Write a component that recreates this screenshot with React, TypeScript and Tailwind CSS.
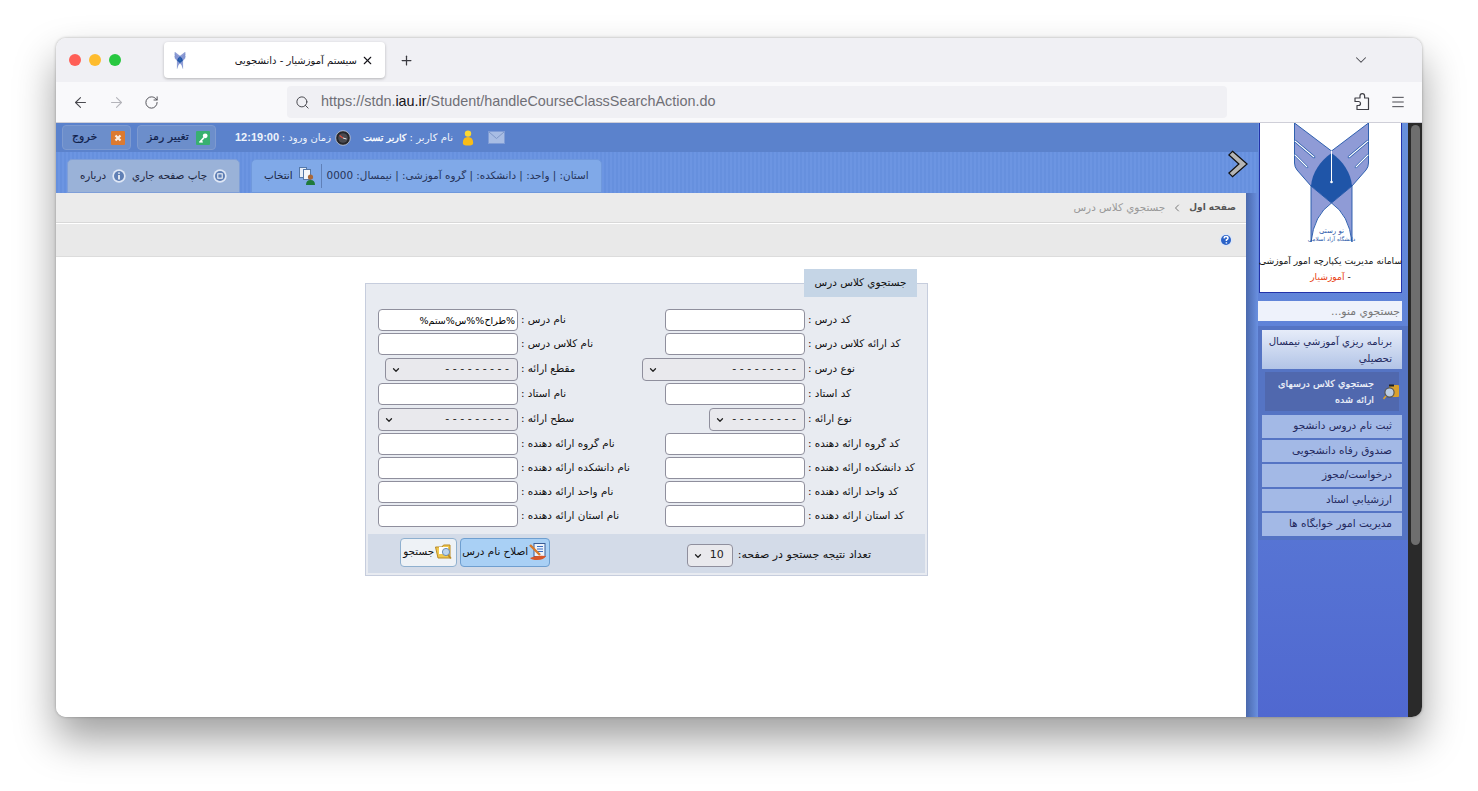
import React from "react";
import { ChevronDown, ChevronLeft, Menu, Plus, RotateCw, Search, X, ArrowLeft, ArrowRight } from "lucide-react";

const FONT = 'font-["DejaVu_Sans","Noto_Sans",sans-serif]';
const DASHES = "- - - - - - - - -";

const Logo: React.FC<{ className?: string; small?: boolean }> = ({ className, small }) => (
  <svg viewBox="0 0 75 121" className={className}>
    <g stroke="#1f55a8" strokeWidth="0.9" fill="#8f9bd6">
      <path d="M0.5 0 L37.5 28 L37.5 60 L17 63 L3 47 Q0.5 44 0.5 40 Z" />
      <path d="M74.5 0 L37.5 28 L37.5 60 L58 63 L72 47 Q74.5 44 74.5 40 Z" />
      <path d="M17 63 L37.5 80 Q20 92 17 119 Z" />
      <path d="M58 63 L37.5 80 Q55 92 58 119 Z" />
    </g>
    <path d="M17 63 C18 50 26 38 37.5 30 C49 38 57 50 58 63 L37.5 80 Z" fill="#1f55a8" />
    <g strokeLinecap="round">
      <path d="M1 18 L20 34 M1 32 L13 44 M74 18 L55 34 M74 32 L62 44" stroke="#1f55a8" strokeWidth="2.4" />
      <path d="M1 18 L20 34 M1 32 L13 44 M74 18 L55 34 M74 32 L62 44" stroke="#ffffff" strokeWidth="1.1" />
    </g>
    <path d="M37.5 28 L37.5 59" stroke="#ffffff" strokeWidth="1" />
    <circle cx="37.5" cy="59" r="1.3" fill="#ffffff" />
    {!small && (
      <>
        <text x="37.5" y="110" textAnchor="middle" fontSize="7" fill="#1f55a8" fontFamily="DejaVu Sans">نو رستی</text>
        <text x="37.5" y="118" textAnchor="middle" fontSize="5.6" fill="#1f55a8" fontFamily="DejaVu Sans">دانشگاه آزاد اسلامی</text>
      </>
    )}
  </svg>
);

const ExitIcon = () => (
  <svg viewBox="0 0 14 14" className="h-[14px] w-[14px]">
    <rect width="14" height="14" rx="1" fill="#dc7a30" />
    <path d="M4.5 4.5 L9.5 9.5 M9.5 4.5 L4.5 9.5" stroke="#fbeee2" strokeWidth="2.2" />
  </svg>
);

const KeyIcon = () => (
  <svg viewBox="0 0 14 14" className="h-[14px] w-[14px]">
    <rect width="14" height="14" rx="1" fill="#38b070" />
    <circle cx="9.2" cy="4.8" r="2.4" fill="#fff" />
    <path d="M8 6.5 L3.5 11.5 M5 10 L6.5 11.5" stroke="#fff" strokeWidth="1.7" />
  </svg>
);

const UserIcon = () => (
  <svg viewBox="0 0 12 16" className="h-[16px] w-[12px]">
    <circle cx="6" cy="3.6" r="3.2" fill="#fcd830" />
    <path d="M0.8 13 Q0.8 7 6 7 Q11.2 7 11.2 13 Q11.2 15.6 6 15.6 Q0.8 15.6 0.8 13 Z" fill="#f8bc18" />
  </svg>
);

const MailIcon = () => (
  <svg viewBox="0 0 17 13" className="h-[13px] w-[17px]">
    <rect x="0.5" y="0.5" width="16" height="12" fill="#a8bde4" stroke="#7f9cd6" />
    <path d="M1 1 L8.5 7.5 L16 1" fill="none" stroke="#7f98c8" />
  </svg>
);

const ClockIcon = () => (
  <svg viewBox="0 0 16 16" className="h-[16px] w-[16px]">
    <circle cx="8" cy="8" r="7.3" fill="#26262a" stroke="#c8cede" strokeWidth="0.8" />
    <circle cx="8" cy="8" r="4.8" fill="#4a4a50" />
    <path d="M8 8 L4.5 5.5" stroke="#e05040" strokeWidth="1.2" />
    <path d="M8 8 L11.5 9" stroke="#e8e8e8" strokeWidth="1" />
  </svg>
);

const RoundIcon: React.FC<{ glyph: "print" | "info" | "help" }> = ({ glyph }) => (
  <svg viewBox="0 0 14 14" className="h-[14px] w-[14px]">
    <circle cx="7" cy="7" r="6.7" fill="#dfe7f5" />
    <circle cx="7" cy="7" r="5" fill={glyph === "help" ? "#2a62c8" : "#5f7fb5"} />
    {glyph === "print" && <rect x="4.8" y="4.8" width="4.4" height="4.4" fill="none" stroke="#fff" strokeWidth="1" />}
    {glyph === "info" && <path d="M7 3.5 V4.8 M7 6 V10.5" stroke="#fff" strokeWidth="1.6" />}
    {glyph === "help" && (
      <path d="M5 5.4 Q5.2 3.6 7 3.6 Q9 3.6 9 5.2 Q9 6.2 7.4 7 V8 M7.4 9.2 V10.6" fill="none" stroke="#fff" strokeWidth="1.5" />
    )}
  </svg>
);

const SelectIcon = () => (
  <svg viewBox="0 0 16 18" className="h-[18px] w-[16px]">
    <rect x="0.5" y="0.5" width="7" height="10" fill="#e8eef8" stroke="#5578a8" />
    <rect x="4.5" y="2.5" width="7" height="10" fill="#f4f6fb" stroke="#5578a8" />
    <circle cx="11.5" cy="10" r="2.6" fill="#a8683a" />
    <path d="M7 18 Q7 13 11.5 13 Q16 13 16 18 Z" fill="#1f7a3a" />
  </svg>
);

const SearchMenuIcon = () => (
  <svg viewBox="0 0 16 16" className="h-[16px] w-[16px] shrink-0">
    <rect x="6" y="1" width="10" height="12" rx="1" fill="#d9a02c" />
    <rect x="6" y="0.5" width="5" height="2" fill="#222" />
    <circle cx="6.5" cy="8.5" r="4.6" fill="#b9cbe3" stroke="#555" strokeWidth="1.2" />
    <path d="M3 12 L0.5 15" stroke="#d9a02c" strokeWidth="1.6" />
  </svg>
);

const SpellIcon = () => (
  <svg viewBox="0 0 18 18" className="h-[18px] w-[18px]">
    <rect x="5" y="0.5" width="11" height="13" fill="#eef3fb" stroke="#3a5c96" />
    <path d="M8 3.5 H14 M8 6 H14 M8 8.5 H14" stroke="#3a6cc0" strokeWidth="1.1" />
    <path d="M1 2 L11 12" stroke="#d8792a" strokeWidth="2.4" />
    <path d="M1 15 Q7 12 17 13 Q15 17 8 17 Q3 17 1 15 Z" fill="#d8562a" />
  </svg>
);

const FolderIcon = () => (
  <svg viewBox="0 0 18 16" className="h-[16px] w-[18px]">
    <path d="M0.5 3 H7 L8.5 1 H15 V14 H3 Z" fill="#f0c84e" stroke="#b98a24" />
    <rect x="4" y="3" width="9" height="7" fill="#fff" />
    <circle cx="11" cy="8" r="3.6" fill="#bcd5ee" stroke="#6d8eb5" />
    <path d="M13 11 L16 14.5" stroke="#b98a24" strokeWidth="1.6" />
  </svg>
);

const PuzzleIcon = () => (
  <svg viewBox="0 0 18 18" className="h-[18px] w-[18px]" fill="none" stroke="#3f3f46" strokeWidth="1.2" strokeLinejoin="round">
    <path d="M7 5 V3 a2.3 2.3 0 0 1 4.6 0 V5 H15.5 V16.5 H4 V12.5 H5.5 a2 2 0 0 0 0 -4 H2 V5 Z" />
  </svg>
);

const HeaderButton: React.FC<{ label: string; width: string; icon: React.ReactNode }> = ({ label, width, icon }) => (
  <button className={`flex h-[25px] items-center justify-between rounded-[4px] border border-[#7d9ad0] bg-[#6c8ecb] pr-[5px] pl-[9px] text-[11px] whitespace-nowrap text-[#10204a] [-webkit-text-stroke:0.2px] ${width}`}>
    <span>{label}</span>
    {icon}
  </button>
);

const Field: React.FC<{ value?: string }> = ({ value }) => (
  <input
    dir="rtl"
    defaultValue={value}
    className="h-[22px] w-[140px] rounded-[4px] border border-[#8f8f9d] bg-white px-[2px] text-[9.5px] text-black outline-none"
  />
);

const Choice: React.FC<{ width: string; value?: string }> = ({ width, value }) => (
  <div className={`relative h-[23px] ${width}`}>
    <select
      dir="rtl"
      className="block h-full w-full appearance-none rounded-[4px] border border-[#8f8f9d] bg-[#e9e9ed] pr-[8px] text-[11px] text-[#222] outline-none"
    >
      <option>{value ?? DASHES}</option>
    </select>
    <ChevronDown className="pointer-events-none absolute top-[7px] left-[6px] h-[10px] w-[10px] text-[#222]" strokeWidth={3} />
  </div>
);

const Label: React.FC<{ children: React.ReactNode }> = ({ children }) => (
  <label className="w-full pl-[3px] text-left text-[10.4px] whitespace-nowrap text-[#111]">{children}</label>
);

const rows: { h: string; right: [string, React.ReactNode]; left: [string, React.ReactNode] }[] = [
  { h: "h-[24px]", right: ["کد درس :", <Field />], left: ["نام درس :", <Field value="%طراح%%س%ستم%" />] },
  { h: "h-[24px]", right: ["کد ارائه کلاس درس :", <Field />], left: ["نام کلاس درس :", <Field />] },
  { h: "h-[26px]", right: ["نوع درس :", <Choice width="w-[163px]" />], left: ["مقطع ارائه :", <Choice width="w-[133px]" />] },
  { h: "h-[24px]", right: ["کد استاد :", <Field />], left: ["نام استاد :", <Field />] },
  { h: "h-[26px]", right: ["نوع ارائه :", <Choice width="w-[96px]" />], left: ["سطح ارائه :", <Choice width="w-[140px]" />] },
  { h: "h-[24px]", right: ["کد گروه ارائه دهنده :", <Field />], left: ["نام گروه ارائه دهنده :", <Field />] },
  { h: "h-[24px]", right: ["کد دانشکده ارائه دهنده :", <Field />], left: ["نام دانشکده ارائه دهنده :", <Field />] },
  { h: "h-[24px]", right: ["کد واحد ارائه دهنده :", <Field />], left: ["نام واحد ارائه دهنده :", <Field />] },
  { h: "h-[24px]", right: ["کد استان ارائه دهنده :", <Field />], left: ["نام استان ارائه دهنده :", <Field />] },
];

const menuItems = ["ثبت نام دروس دانشجو", "صندوق رفاه دانشجویی", "درخواست/مجوز", "ارزشيابي استاد", "مديريت امور خوابگاه ها"];

const stripes = "bg-[repeating-linear-gradient(90deg,#6690de_0px,#6690de_2px,#6c95e2_2px,#6c95e2_4px)]";

const BrowserChrome = () => (
  <>
    <div className="flex h-[44px] items-center bg-[#f0f0f4] pl-[13px]">
      <div className="flex gap-[8px]">
        <span className="h-[12px] w-[12px] rounded-full bg-[#ff5f57]" />
        <span className="h-[12px] w-[12px] rounded-full bg-[#febc2e]" />
        <span className="h-[12px] w-[12px] rounded-full bg-[#28c840]" />
      </div>
      <div className="ml-[43px] flex h-[36px] w-[221px] items-center rounded-[4px] bg-white pr-[11px] pl-[9px] shadow-[0_1px_3px_rgba(0,0,0,0.25)]">
        <Logo small className="h-[17px] w-[14px]" />
        <span dir="rtl" className={`ml-auto text-[10px] text-[#15141a] ${FONT}`}>سیستم آموزشیار - دانشجویی</span>
        <X className="ml-[4px] h-[13px] w-[13px] text-[#15141a]" />
      </div>
      <Plus className="ml-[14px] h-[15px] w-[15px] text-[#3a3a40]" />
      <ChevronDown className="mr-[52px] ml-auto h-[18px] w-[18px] text-[#4a4a50]" strokeWidth={1.4} />
    </div>
    <div className="flex h-[41px] items-center border-b border-[#cfcfd8] bg-[#f9f9fb] pl-[16px]">
      <ArrowLeft className="h-[17px] w-[17px] text-[#4a4a50]" strokeWidth={1.5} />
      <ArrowRight className="ml-[19px] h-[17px] w-[17px] text-[#b4b4ba]" strokeWidth={1.5} />
      <RotateCw className="ml-[19px] h-[15px] w-[15px] text-[#4a4a50]" strokeWidth={1.5} />
      <div className="ml-[128px] flex h-[32px] w-[940px] items-center rounded-[4px] bg-[#f0f0f4] pl-[8px]">
        <Search className="h-[15px] w-[15px] text-[#4a4a50]" strokeWidth={1.6} />
        <span className='ml-[11px] font-["Liberation_Sans",sans-serif] text-[14.4px] text-[#6f6f76]'>
          https://stdn.<span className="text-[#15141a]">iau.ir</span>/Student/handleCourseClassSearchAction.do
        </span>
      </div>
      <span className="ml-[126px]"><PuzzleIcon /></span>
      <Menu className="ml-[19px] h-[16px] w-[16px] text-[#4a4a50]" strokeWidth={1.5} />
    </div>
  </>
);

const PageHeader = () => (
  <div className={`h-[70px] ${stripes}`}>
    <div className="flex h-[29px] items-center bg-[#5b82cc] pl-[6px] text-[#eef3fb]">
      <HeaderButton label="خروج" width="w-[69px]" icon={<ExitIcon />} />
      <div className="ml-[6px]">
        <HeaderButton label="تغییر رمز" width="w-[79px]" icon={<KeyIcon />} />
      </div>
      <span className='ml-[19px] font-["Liberation_Sans",sans-serif] text-[11px] font-bold'>12:19:00</span>
      <span dir="rtl" className="ml-[4px] w-[48px] text-[10px] whitespace-nowrap">زمان ورود :</span>
      <span className="ml-[4px]"><ClockIcon /></span>
      <span dir="rtl" className="ml-[15px] w-[87px] text-[10.2px] whitespace-nowrap">نام کاربر : <span className="text-[9.5px] text-white [-webkit-text-stroke:0.3px]">کاربر تست</span></span>
      <span className="ml-[9px]"><UserIcon /></span>
      <span className="ml-[14px]"><MailIcon /></span>
    </div>
    <div className="flex h-[41px] items-end pl-[11px]">
      <div className="flex h-[34px] w-[173px] items-center justify-center gap-[6px] rounded-t-[5px] border border-[#7f9fd8] bg-[#9ab2d8] text-[10.4px] text-[#1a2440]">
        <span>درباره</span>
        <RoundIcon glyph="info" />
        <span>چاپ صفحه جاري</span>
        <RoundIcon glyph="print" />
      </div>
      <div className="ml-[11px] flex h-[34px] w-[351px] items-center rounded-t-[5px] border border-[#6f98dc] bg-[#80a9e8] pl-[12px] text-[10.4px] text-[#1a2440]">
        <span>انتخاب</span>
        <span className="ml-[6px]"><SelectIcon /></span>
        <span className="ml-[6px] h-[24px] border-l border-[#5f80b8]" />
        <span dir="rtl" className="ml-[5px] whitespace-nowrap text-[#26345a]">استان: | واحد: | دانشکده: | گروه آموزشی: | نیمسال: 0000</span>
      </div>
      <svg viewBox="0 0 22 30" className="mr-[10px] mb-[14px] ml-auto h-[30px] w-[20px]">
        <path d="M5 1 L21 15 L5 29 L1 25 L12 15 L1 5 Z" fill="#b5b5b5" stroke="#111" strokeWidth="1.4" />
      </svg>
    </div>
  </div>
);

const SearchForm = () => (
  <div dir="rtl" className="relative mt-[26px] ml-[309px] h-[293px] w-[563px] border border-[#c6cddd] bg-[#e8ebf1] pt-[24px]">
    <div className="absolute top-[-15px] right-[10px] flex h-[28px] w-[113px] items-center justify-center bg-[#c5d5e6] text-[10.4px] text-[#111]">
      جستجوي کلاس درس
    </div>
    <div className="mr-[10px]">
      {rows.map((row) => (
        <div key={row.right[0]} className={`grid grid-cols-[112px_173px_114px_140px] ${row.h}`}>
          <div className="flex items-center"><Label>{row.right[0]}</Label></div>
          <div className="flex items-center">{row.right[1]}</div>
          <div className="flex items-center"><Label>{row.left[0]}</Label></div>
          <div className="flex items-center">{row.left[1]}</div>
        </div>
      ))}
    </div>
    <div className="mx-[2px] mt-[6px] flex h-[39px] items-center bg-[#d3dbe8] pr-[54px]">
      <span className="mt-[3px] text-[11px] text-[#111]">تعداد نتیجه جستجو در صفحه:</span>
      <div className="mt-[3px] mr-[5px]"><Choice width="w-[46px]" value="10" /></div>
      <button className="mr-[137px] mb-[3px] flex h-[29px] w-[90px] items-center justify-center gap-[1px] rounded-[4px] border border-[#6f9fd0] bg-[#a9d0f5] text-[10.4px] text-[#111]">
        <SpellIcon />
        اصلاح نام درس
      </button>
      <button className="mr-[3px] mb-[3px] flex h-[29px] w-[57px] items-center justify-center gap-[1px] rounded-[4px] border border-[#8fb0cf] bg-[#eef2f6] text-[10.4px] text-[#111]">
        <FolderIcon />
        جستجو
      </button>
    </div>
  </div>
);

const Sidebar = () => (
  <div dir="rtl" className="flex w-[150px] flex-col bg-gradient-to-b from-[#6890dc] to-[#5068d0]">
    <div className="mr-[6px] ml-[1px] flex h-[170px] flex-col items-center border-x border-b border-[#2233aa] bg-white">
      <Logo className="ml-[2px] h-[121px] w-[75px] shrink-0" />
      <div className="mt-[10px] text-[9.2px] whitespace-nowrap text-[#111]">سامانه مدیریت یکپارچه امور آموزشی</div>
      <div className="mt-[2px] text-[9.2px] text-[#111]">- <span className="text-[#e8400f]">آموزشیار</span></div>
    </div>
    <input placeholder="جستجوي منو..." className="mt-[8px] mr-[6px] h-[20px] w-[144px] bg-[#eef2fb] px-[2px] text-[10.8px] outline-none placeholder:text-[#777]" />
    <div className="mt-[5px] w-[150px] bg-[#5574c4] pt-[4px] pr-[6px] pb-[4px] pl-[4px]">
      <div className="bg-gradient-to-b from-[#e6ecf9] to-[#b2c4e6] py-[2.5px] pr-[10px] text-[10.2px] leading-[17px] text-[#23295e]">
        برنامه ريزي آموزشي نیمسال تحصيلي
      </div>
      <div className="mx-[3px] mt-[3px] flex h-[39px] items-center bg-[#5068ae] text-[9.6px] leading-[16px] text-[#f2f5fb] [-webkit-text-stroke:0.2px]">
        <SearchMenuIcon />
        <span className="mr-[9px] w-[100px]">جستجوي کلاس درسهای ارائه شده</span>
      </div>
      <div className="mt-[4px] flex flex-col gap-[2px]">
        {menuItems.map((item) => (
          <div key={item} className="flex h-[22.5px] items-center bg-[#a3b9e6] pr-[10px] text-[10.5px] text-[#23295e]">
            {item}
          </div>
        ))}
      </div>
    </div>
  </div>
);

export default function App() {
  return (
    <div className={`h-[791px] w-[1478px] overflow-hidden bg-white pt-[38px] pl-[56px] ${FONT}`}>
      <div className="h-[679px] w-[1366px] overflow-hidden rounded-[10px] shadow-[0_22px_40px_rgba(0,0,0,0.38),0_0_3px_rgba(0,0,0,0.3)]">
        <BrowserChrome />
        <div className="flex h-[594px]">
          <div className="w-[1202px] shrink-0">
            <PageHeader />
            <div className="flex h-[524px]">
              <div className="w-[1190px] bg-white">
                <div dir="rtl" className="flex h-[30px] items-center gap-[6px] border-b border-[#d8d8d8] bg-[#ebebeb] pr-[10px] text-[10.4px]">
                  <b className="text-[9px] text-[#555]">صفحه اول</b>
                  <ChevronLeft className="h-[12px] w-[12px] text-[#666]" strokeWidth={1.7} />
                  <span className="text-[#999]">جستجوي کلاس درس</span>
                </div>
                <div dir="rtl" className="mt-[1px] flex h-[33px] items-center border-b border-[#dcdcdc] bg-[#e9e9e9] pr-[13px]">
                  <RoundIcon glyph="help" />
                </div>
                <SearchForm />
              </div>
              <div className="w-[12px] bg-gradient-to-r from-[#4a69ad] to-[#6a90e0]" />
            </div>
          </div>
          <Sidebar />
          <div className="w-[14px] bg-[#2a2a2a] px-[3px] pt-[2px]">
            <div className="h-[420px] w-[9px] rounded-[5px] bg-[#6e6e6e]" />
          </div>
        </div>
      </div>
    </div>
  );
}
